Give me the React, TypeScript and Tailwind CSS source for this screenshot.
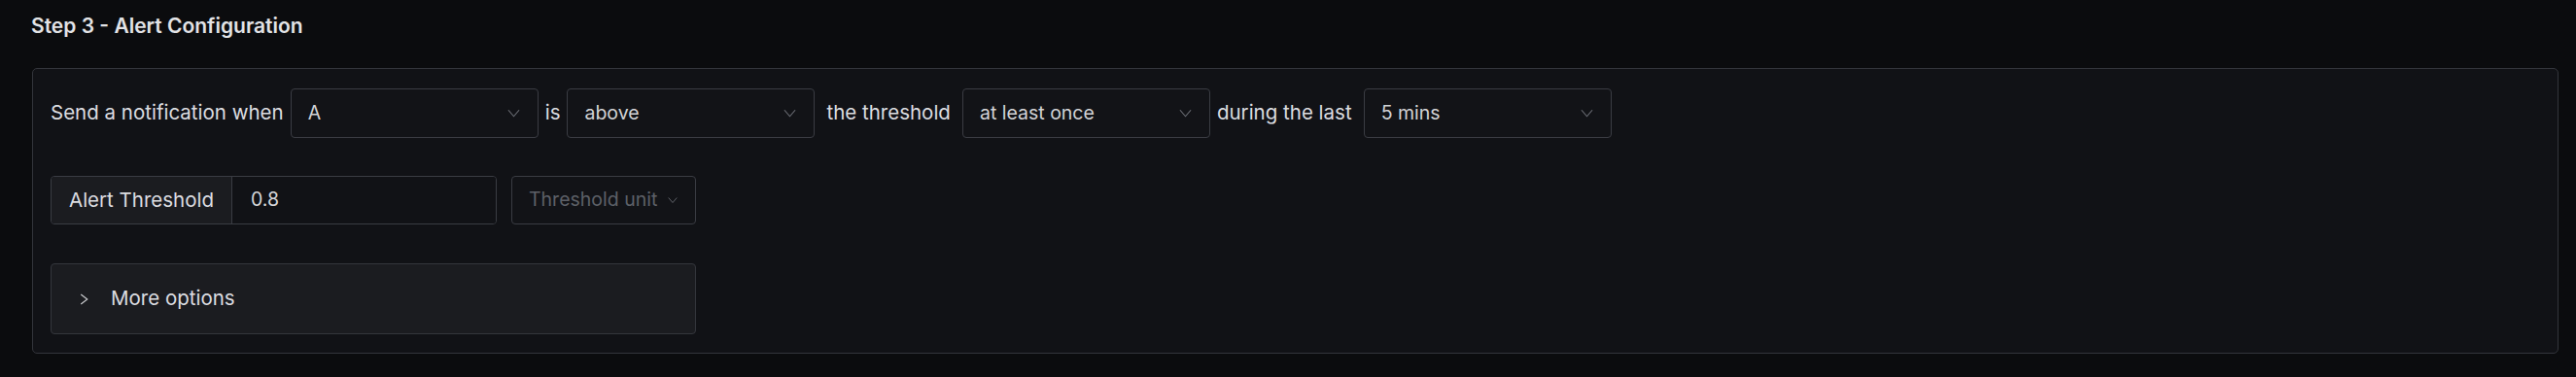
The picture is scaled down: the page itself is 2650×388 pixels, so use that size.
import React from 'react';

function Chevron({ className = '' }: { className?: string }) {
  return (
    <svg viewBox="0 0 14 9" className={className} fill="none" stroke="currentColor" strokeWidth="1.2">
      <polyline points="1,1 7,8 13,1" />
    </svg>
  );
}

function Select({ value, width }: { value: string; width: string }) {
  return (
    <div
      className={`flex h-[51px] ${width} items-center justify-between rounded-[4px] border border-[#3a3c43] bg-[#121317] pl-[17px] pr-[18px]`}
    >
      <span className="text-[19.5px] text-[#d2d3d6]">{value}</span>
      <Chevron className="h-[9px] w-[13px] text-[#6c6f76]" />
    </div>
  );
}

export default function App() {
  return (
    <div
      className="min-h-[388px] w-full bg-[#0b0c0e] pl-[32px] pr-[18px] pt-[13px] text-[#dcdde0]"
      style={{ fontFamily: 'Inter, "Noto Sans", sans-serif' }}
    >
      <h2 className="text-[21px] leading-[28px] font-semibold text-[#e2e3e6]">Step 3 - Alert Configuration</h2>

      <div className="ml-px mt-[29px] rounded-[5px] border border-[#33353b] bg-[#111216] pb-[19px] pl-[18px] pr-[18px] pt-[20px]">
        <div className="flex items-center gap-[7px] text-[20.5px]">
          <span>Send a notification when</span>
          <Select value="A" width="w-[255px]" />
          <span>is</span>
          <Select value="above" width="w-[255px]" />
          <span className="mx-[5px]">the threshold</span>
          <Select value="at least once" width="w-[255px]" />
          <span className="mr-[5px]">during the last</span>
          <Select value="5 mins" width="w-[255px]" />
        </div>

        <div className="mt-[39px] flex items-center gap-[15px]">
          <div className="flex h-[50px] w-[459px] overflow-hidden rounded-[4px] border border-[#3a3c43]">
            <div className="flex items-center border-r border-[#3a3c43] bg-[#1b1c20] px-[18px] text-[20.5px]">
              Alert Threshold
            </div>
            <div className="flex flex-1 items-center bg-[#111216] pl-[19px] text-[19.5px] text-[#d6d7da]">0.8</div>
          </div>
          <div className="flex h-[50px] w-[190px] items-center justify-between rounded-[4px] border border-[#3a3c43] bg-[#121317] pl-[17px] pr-[18px]">
            <span className="text-[19.5px] text-[#5d6067]">Threshold unit</span>
            <Chevron className="h-[8px] w-[10px] text-[#6c6f76]" />
          </div>
        </div>

        <div className="mt-[40px] flex h-[73px] w-[664px] items-center rounded-[4px] border border-[#34363c] bg-[#1b1c20] pl-[29px]">
          <svg viewBox="0 0 9 13" className="h-[12px] w-[9px] text-[#c9cacd]" fill="none" stroke="currentColor" strokeWidth="1.3">
            <polyline points="1,1 8,6.5 1,12" />
          </svg>
          <span className="ml-[23px] text-[20.5px]">More options</span>
        </div>
      </div>
    </div>
  );
}
